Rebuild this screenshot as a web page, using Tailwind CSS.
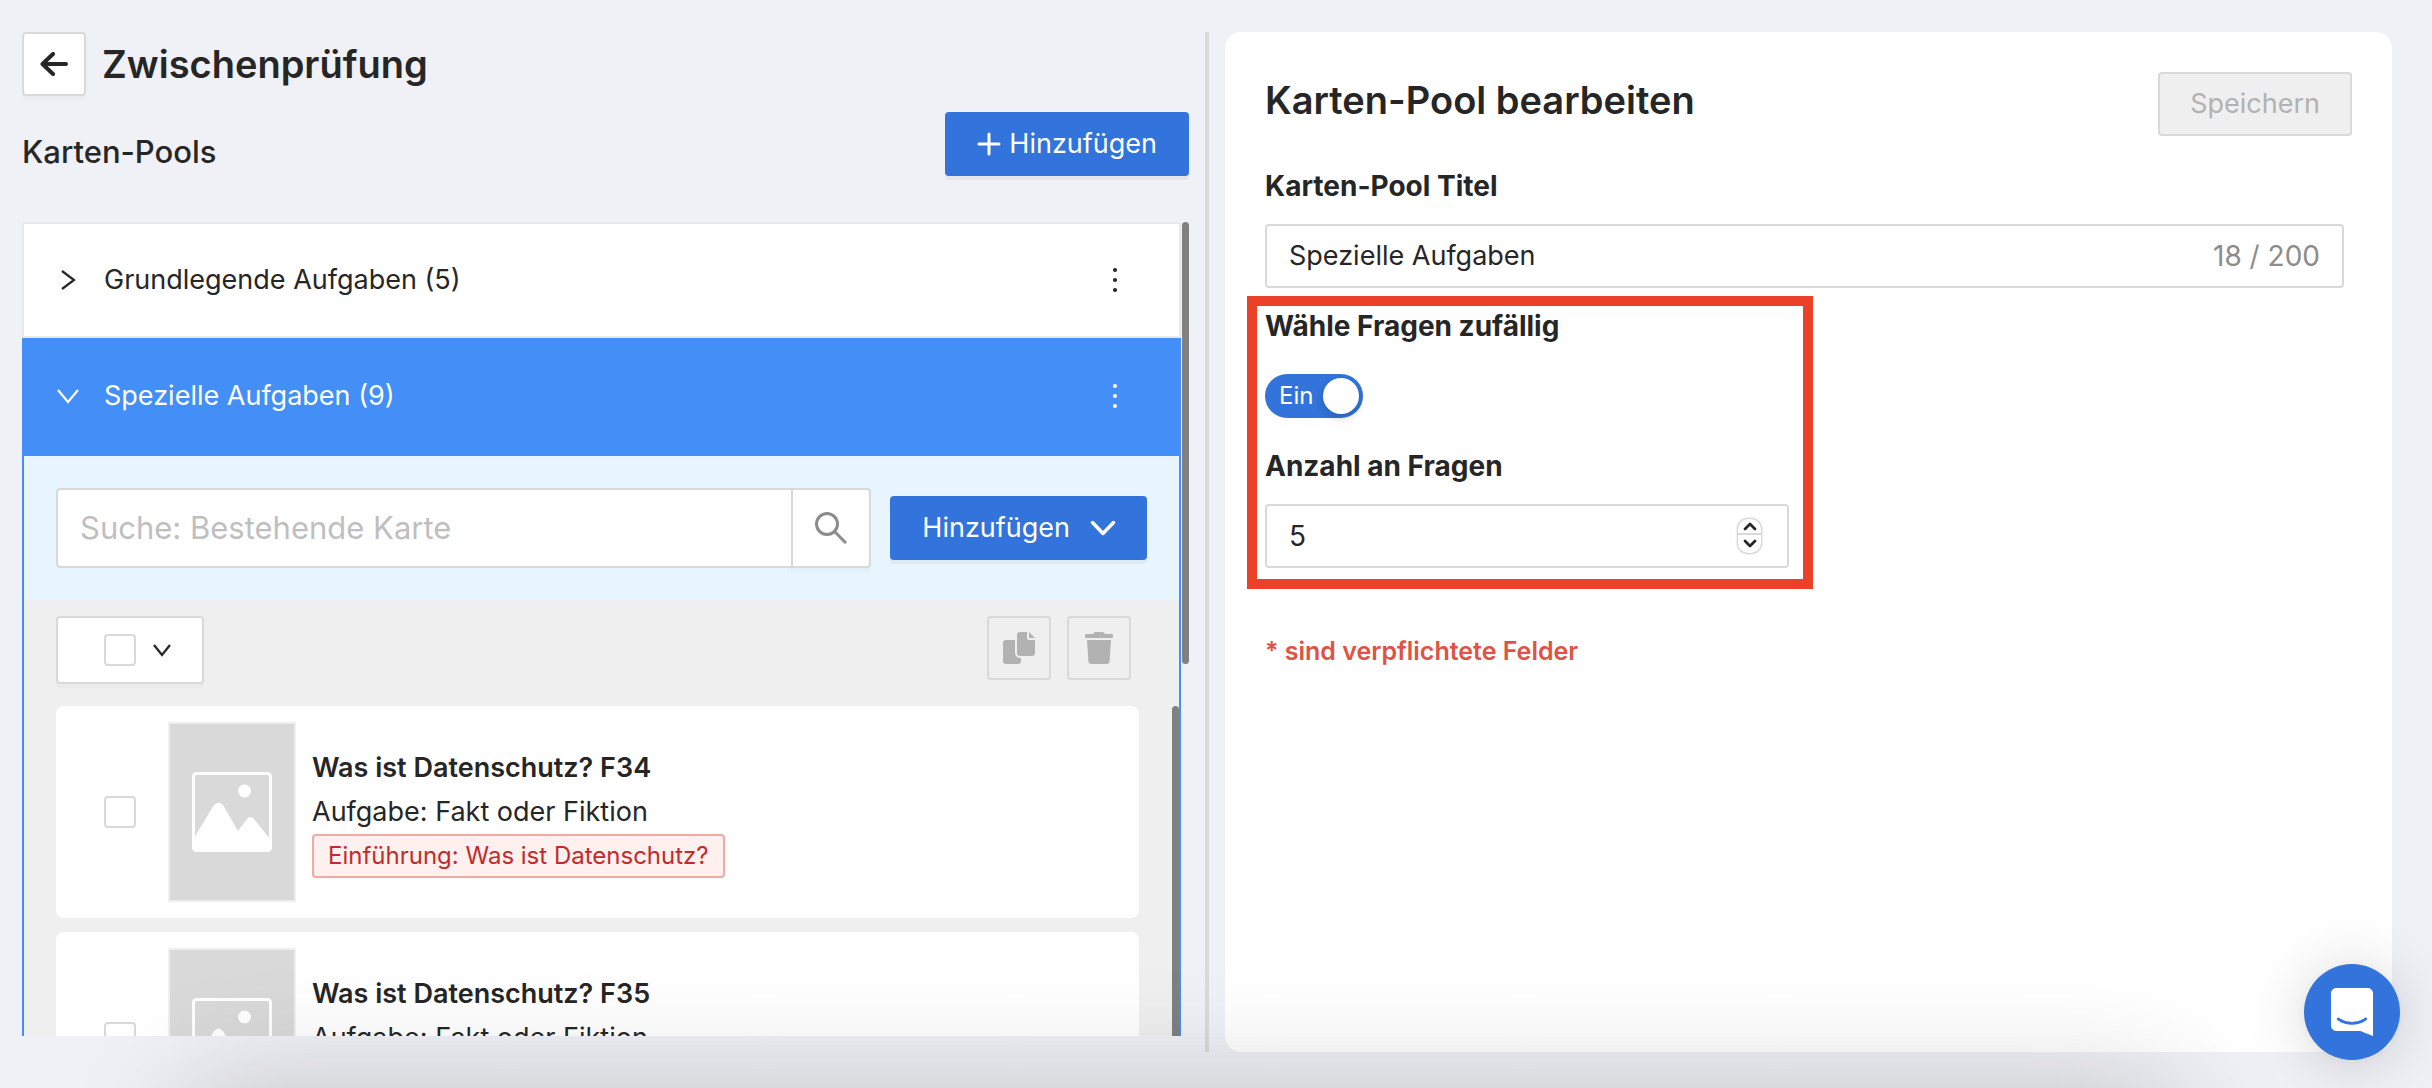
<!DOCTYPE html>
<html lang="de">
<head>
<meta charset="utf-8">
<meta name="viewport" content="width=device-width, initial-scale=1">
<title>Zwischenprüfung</title>
<script src="https://cdn.jsdelivr.net/npm/@tailwindcss/browser@4"></script>
</head>
<body class="grid h-screen grid-cols-[minmax(0,1fr)_4px_minmax(0,1fr)] grid-rows-[minmax(0,1fr)] gap-4 overflow-hidden bg-[#f0f1f6] pt-8 pr-10 pb-9 pl-[22px] font-['Inter',sans-serif] text-[27px] leading-8 text-[#262626]">

<!-- Card pools -->
<section class="flex min-w-0 flex-col pb-4">
  <header class="flex h-16 items-center gap-4">
    <button type="button" aria-label="Zurück" class="flex size-16 items-center justify-center rounded-[4px] border-2 border-[#d9d9d9] bg-white shadow-[0_4px_0_rgba(0,0,0,0.02)]">
      <svg class="h-6 w-7" viewBox="0 0 28 24" fill="none" stroke="currentColor" stroke-width="4" stroke-linecap="round" stroke-linejoin="round"><path d="M13 2 2.500 12 13 22M3 12h23"/></svg>
    </button>
    <h1 class="text-[38px] font-semibold leading-[48px]">Zwischenprüfung</h1>
  </header>

  <div class="mt-4 flex items-center justify-between">
    <h2 class="pt-4 text-[31px] font-medium leading-10">Karten-Pools</h2>
    <button type="button" class="flex h-16 items-center gap-2 rounded-[4px] bg-[#3273dc] px-8 text-white shadow-[0_4px_0_rgba(0,0,0,0.045)]">
      <svg class="size-6" viewBox="0 0 24 24" fill="none" stroke="currentColor" stroke-width="3" stroke-linecap="round"><path d="M12 2v20M2 12h20"/></svg>
      Hinzufügen
    </button>
  </div>

  <div class="mt-[46px] flex min-h-0 flex-1 gap-px overflow-hidden">
    <div class="flex min-w-0 flex-1 flex-col">
      <div class="flex h-[116px] shrink-0 items-center justify-between border-2 border-[#e8e8e8] bg-white pr-9 pl-[30px]">
        <button type="button" class="flex items-center gap-[22px]">
          <svg class="size-7" viewBox="0 0 28 28" fill="none" stroke="currentColor" stroke-width="2.200"><path d="m8 5 12 9-12 9"/></svg>
          Grundlegende Aufgaben (5)
        </button>
        <button type="button" aria-label="Mehr" class="flex size-14 items-center justify-center">
          <svg class="size-7" viewBox="0 0 28 28" fill="currentColor"><circle cx="14" cy="4" r="2.100"/><circle cx="14" cy="14" r="2.100"/><circle cx="14" cy="24" r="2.100"/></svg>
        </button>
      </div>

      <div class="flex h-[118px] shrink-0 items-center justify-between bg-[#448ef7] pr-[38px] pb-[2px] pl-8 text-white">
        <button type="button" class="flex items-center gap-[22px]">
          <svg class="size-7" viewBox="0 0 28 28" fill="none" stroke="currentColor" stroke-width="2.200"><path d="m4 8 10 12 10-12"/></svg>
          Spezielle Aufgaben (9)
        </button>
        <button type="button" aria-label="Mehr" class="flex size-14 items-center justify-center">
          <svg class="size-7" viewBox="0 0 28 28" fill="currentColor"><circle cx="14" cy="4" r="2.100"/><circle cx="14" cy="14" r="2.100"/><circle cx="14" cy="24" r="2.100"/></svg>
        </button>
      </div>

      <div class="flex min-h-0 flex-1 flex-col border-x-2 border-[#448ef7] bg-[#efefef]">
        <div class="flex items-center gap-[19px] bg-[#e8f5fe] p-8">
          <form class="flex h-20 min-w-0 flex-1">
            <input type="search" aria-label="Suche: Bestehende Karte" placeholder="Suche: Bestehende Karte" class="min-w-0 flex-1 rounded-l-[4px] border-2 border-r-0 border-[#d9d9d9] bg-white px-[22px] text-[31px] leading-10 outline-none placeholder:text-[#bfbfbf]">
            <button type="button" aria-label="Suchen" class="flex w-20 items-center justify-center rounded-r-[4px] border-2 border-[#d9d9d9] bg-white text-[#8c8c8c] shadow-[0_4px_0_rgba(0,0,0,0.02)]">
              <svg class="size-8" viewBox="0 0 32 32" fill="none" stroke="currentColor" stroke-width="3"><circle cx="12" cy="12" r="10.500"/><path d="m19.500 19.500 11.500 11.500"/></svg>
            </button>
          </form>
          <button type="button" class="flex h-16 items-center gap-[19px] rounded-[4px] bg-[#3273dc] pr-[30px] pl-8 text-white shadow-[0_4px_0_rgba(0,0,0,0.045)]">
            Hinzufügen
            <svg class="h-7 w-7" viewBox="0 0 28 28" fill="none" stroke="currentColor" stroke-width="3.500" stroke-linecap="round" stroke-linejoin="round"><path d="m3.500 8.500 10.500 11 10.500-11"/></svg>
          </button>
        </div>

        <div class="flex h-[106px] shrink-0 items-start justify-between pt-4 pr-12 pl-8">
          <div class="flex h-[68px] w-[148px] items-center gap-4 rounded-[4px] border-2 border-[#d9d9d9] bg-white pl-[46px] shadow-[0_4px_0_rgba(0,0,0,0.02)]">
            <input type="checkbox" aria-label="Alle auswählen" class="size-8 appearance-none rounded-[4px] border-2 border-[#d9d9d9] bg-white">
            <button type="button" aria-label="Auswahlmenü">
              <svg class="block size-5" viewBox="0 0 20 20" fill="none" stroke="currentColor" stroke-width="2.300"><path d="m2 5 8 10 8-10"/></svg>
            </button>
          </div>
          <div class="flex gap-4">
            <button type="button" disabled aria-label="Kopieren" class="flex size-16 items-center justify-center rounded-[4px] border-2 border-[#d9d9d9] bg-[#efefef] text-[#b2b2b2]">
              <svg class="size-8" viewBox="0 0 32 32" fill="currentColor"><path d="M3 8h9v13a5 5 0 0 0 5 5h1v3a3 3 0 0 1-3 3H3a3 3 0 0 1-3-3V11a3 3 0 0 1 3-3Z"/><path d="M17 0h7v6a2 2 0 0 0 2 2h6v13a3 3 0 0 1-3 3H17a3 3 0 0 1-3-3V3a3 3 0 0 1 3-3Z"/><path d="m26 0 6 6h-6Z"/></svg>
            </button>
            <button type="button" disabled aria-label="Löschen" class="flex size-16 items-center justify-center rounded-[4px] border-2 border-[#d9d9d9] bg-[#efefef] text-[#b2b2b2]">
              <svg class="h-8 w-7" viewBox="0 0 28 32" fill="currentColor"><path d="M1.500 2H8l1-1.200C9.500.2 10 0 10.700 0h6.600c.7 0 1.200.2 1.700.8L20 2h6.500c.8 0 1.500.7 1.500 1.500V5c0 .6-.4 1-1 1H1c-.6 0-1-.4-1-1V3.500C0 2.700.700 2 1.500 2ZM2 8h24l-1.400 21.200a3 3 0 0 1-3 2.800H6.400a3 3 0 0 1-3-2.800L2 8Z"/></svg>
            </button>
          </div>
        </div>

        <div class="flex min-h-0 flex-1 overflow-hidden">
          <ul class="flex min-w-0 flex-1 flex-col gap-[14px] pr-[33px] pl-8">
            <li class="flex h-[212px] shrink-0 items-center rounded-lg bg-white pl-12">
              <input type="checkbox" aria-label="Was ist Datenschutz? F34" class="size-8 shrink-0 appearance-none rounded-[4px] border-2 border-[#d9d9d9] bg-white">
              <div class="ml-8 flex h-[180px] w-32 shrink-0 items-center justify-center border-2 border-[#efefef] bg-[#d9d9d9]">
                <svg class="size-20" viewBox="0 0 80 80" fill="#fff"><rect x="1.500" y="1.500" width="77" height="77" rx="3" fill="none" stroke="#fff" stroke-width="3"/><circle cx="52.500" cy="19" r="6.500"/><path d="M2 66 22 33q4.500-5 9 0l15 26 9-12q3.500-4 7 0l16 20v11H2Z"/></svg>
              </div>
              <div class="ml-4 flex flex-col items-start">
                <h3 class="text-[27px] font-semibold leading-[44px]">Was ist Datenschutz? F34</h3>
                <p class="leading-[44px]">Aufgabe: Fakt oder Fiktion</p>
                <span class="flex h-11 items-center rounded-[4px] border-2 border-[#f3a9a3] bg-[#fdf0ee] px-[14px] text-2xl text-[#c12b2b]">Einführung: Was ist Datenschutz?</span>
              </div>
            </li>
            <li class="flex h-[212px] shrink-0 items-center rounded-lg bg-white pl-12">
              <input type="checkbox" aria-label="Was ist Datenschutz? F35" class="size-8 shrink-0 appearance-none rounded-[4px] border-2 border-[#d9d9d9] bg-white">
              <div class="ml-8 flex h-[180px] w-32 shrink-0 items-center justify-center border-2 border-[#efefef] bg-[#d9d9d9]">
                <svg class="size-20" viewBox="0 0 80 80" fill="#fff"><rect x="1.500" y="1.500" width="77" height="77" rx="3" fill="none" stroke="#fff" stroke-width="3"/><circle cx="52.500" cy="19" r="6.500"/><path d="M2 66 22 33q4.500-5 9 0l15 26 9-12q3.500-4 7 0l16 20v11H2Z"/></svg>
              </div>
              <div class="ml-4 flex flex-col items-start">
                <h3 class="text-[27px] font-semibold leading-[44px]">Was ist Datenschutz? F35</h3>
                <p class="leading-[44px]">Aufgabe: Fakt oder Fiktion</p>
                <span class="flex h-11 items-center rounded-[4px] border-2 border-[#f3a9a3] bg-[#fdf0ee] px-[14px] text-2xl text-[#c12b2b]">Einführung: Was ist Datenschutz?</span>
              </div>
            </li>
          </ul>
          <div class="w-[7px] rounded-t-full bg-[#808080]"></div>
        </div>
      </div>
    </div>
    <div class="h-[442px] w-[7px] rounded-full bg-[#808080]"></div>
  </div>
</section>

<div class="bg-[#d9dbdb]"></div>

<!-- Edit form -->
<form class="flex min-w-0 flex-col rounded-2xl bg-white p-10">
  <div class="flex items-start justify-between">
    <h2 class="text-[38px] font-semibold leading-[56px]">Karten-Pool bearbeiten</h2>
    <button type="button" disabled class="h-16 rounded-[4px] border-2 border-[#d9d9d9] bg-[#efefef] px-[30px] text-[#b2b2b2]">Speichern</button>
  </div>

  <label for="titel" class="mt-[34px] text-[28px] font-bold">Karten-Pool Titel</label>
  <div class="mt-[22px] mr-2 flex h-16 items-center rounded-[4px] border-2 border-[#d9d9d9] bg-white px-[22px]">
    <input id="titel" type="text" value="Spezielle Aufgaben" class="min-w-0 flex-1 outline-none">
    <span class="text-[28px] text-[#8c8c8c]">18 / 200</span>
  </div>

  <div class="-ml-[18px] mt-2 flex w-[566px] flex-col border-[10px] border-[#ea4128] px-2 pt-1 pb-[11px]">
    <label for="zufall" class="text-[28px] font-bold">Wähle Fragen zufällig</label>
    <label class="mt-8 flex h-11 w-[98px] items-center rounded-full bg-[#3273dc] p-1 pl-[14px] text-2xl text-white">
      <span>Ein</span>
      <input id="zufall" type="checkbox" role="switch" checked class="ml-auto size-9 appearance-none rounded-full bg-white shadow-[0_4px_8px_rgba(0,35,11,0.2)]">
    </label>
    <label for="anzahl" class="mt-8 text-[28px] font-bold">Anzahl an Fragen</label>
    <div class="mt-[22px] mr-1.5 flex h-16 items-center rounded-[4px] border-2 border-[#d9d9d9] bg-white pr-[26px] pl-[22px]">
      <input id="anzahl" type="number" value="5" class="min-w-0 flex-1 text-[28px] outline-none [appearance:textfield]">
      <div class="flex w-[23px] flex-col divide-y-2 divide-[#d9d9d9] rounded-[10px] bg-white shadow-[0_0_2px_1px_rgba(0,0,0,0.22)]">
        <button type="button" aria-label="Erhöhen" class="flex h-4 items-center justify-center"><svg class="size-4" viewBox="0 0 16 16" fill="none" stroke="currentColor" stroke-width="2.800" stroke-linecap="round" stroke-linejoin="round"><path d="m3 11 5-5 5 5"/></svg></button>
        <button type="button" aria-label="Verringern" class="flex h-[18px] items-center justify-center"><svg class="size-4" viewBox="0 0 16 16" fill="none" stroke="currentColor" stroke-width="2.800" stroke-linecap="round" stroke-linejoin="round"><path d="m3 5 5 5 5-5"/></svg></button>
      </div>
    </div>
  </div>

  <p class="mt-[46px] text-[25px] font-semibold text-[#de5343]">* sind verpflichtete Felder</p>
</form>

<!-- Soft shadow rising from below the window -->
<div class="pointer-events-none fixed top-full right-[250px] left-[180px] h-40 rounded-[40px] shadow-[0_0_120px_rgba(0,0,0,0.2)]"></div>

<!-- Chat launcher -->
<button type="button" aria-label="Chat öffnen" class="fixed right-8 bottom-7 flex size-24 items-center justify-center rounded-full bg-[#3273dc] text-white shadow-[0_2px_12px_rgba(0,0,0,0.06),0_4px_64px_rgba(0,0,0,0.16)]">
  <svg class="h-12 w-[42px]" viewBox="0 0 28 32" fill="currentColor"><path d="M28 32s-4.714-1.855-8.527-3.340H3.437C1.540 28.660 0 27.026 0 25.013V3.644C0 1.633 1.540 0 3.437 0h21.125c1.898 0 3.437 1.632 3.437 3.645v18.404H28V32zm-4.139-11.982a.88.88 0 00-1.292-.105c-.03.026-3.015 2.681-8.570 2.681-5.486 0-8.517-2.636-8.571-2.684a.88.88 0 00-1.290.107 1.010 1.010 0 00-.219.708.992.992 0 00.318.664c.142.128 3.537 3.150 9.762 3.150 6.226 0 9.621-3.022 9.763-3.150a.992.992 0 00.317-.664 1.010 1.010 0 00-.218-.707z"/></svg>
</button>
</body>
</html>
